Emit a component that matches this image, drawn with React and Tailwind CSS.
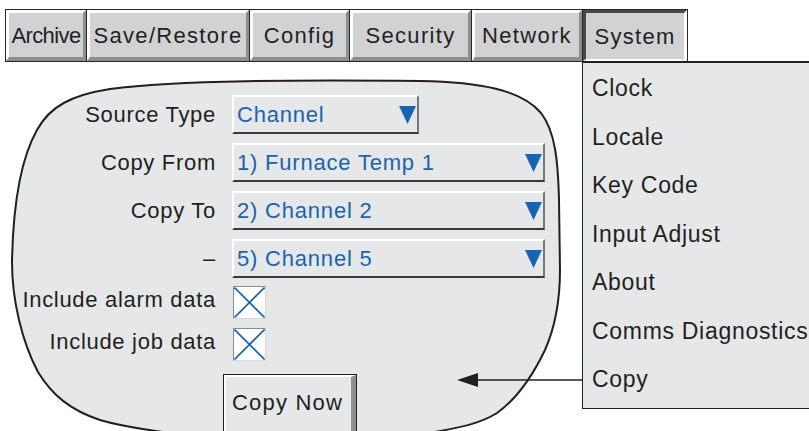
import React from "react";

const FONT = { fontFamily: '"Liberation Sans", Arial, Helvetica, sans-serif' };

function Tab({ label, w, tight, pressed, last }) {
  return (
    <div
      className={`h-[53px] border-y border-l border-[#2b2728] ${last ? "border-r" : ""} flex`}
      style={{ width: w }}
    >
      <div
        className={
          pressed
            ? "flex-1 flex items-center justify-center pt-[2px] bg-[#d1d2d4] border-t-[3px] border-l-[3px] border-t-[#4a4748] border-l-[#4a4748] border-b-[2px] border-r-[3px] border-b-white border-r-white"
            : "flex-1 flex items-center justify-center pt-[2px] bg-[#d1d2d4] border-t-[3px] border-l-[3px] border-t-white border-l-white border-b-[4px] border-r-[3px] border-b-[#8d8e90] border-r-[#8d8e90]"
        }
      >
        <span
          className={`text-[22px] leading-[22px] text-[#231f20] whitespace-nowrap ${
            tight ? "tracking-[-0.6px]" : "tracking-[1.3px]"
          }`}
        >
          {label}
        </span>
      </div>
    </div>
  );
}

function Tri() {
  return (
    <svg width="17" height="18" viewBox="0 0 17 18">
      <polygon points="0,0 17,0 8.5,18" fill="#1764b0" />
    </svg>
  );
}

function Label({ children, extra = "" }) {
  return (
    <div
      className={`w-[216px] shrink-0 text-right text-[22px] leading-[26px] tracking-[0.7px] text-[#231f20] whitespace-nowrap ${extra}`}
    >
      {children}
    </div>
  );
}

function Drop({ text, w, mt }) {
  return (
    <div className={`flex items-center ${mt}`}>
      <Label>{text[0]}</Label>
      <div
        className="ml-[16px] h-[39px] flex items-center justify-between pl-[3px] pr-[1px] border-t-2 border-l-2 border-t-white border-l-white border-b-2 border-r-2 border-b-[#3a3637] border-r-[#77787b]"
        style={{ width: w }}
      >
        <span className="text-[22px] leading-[26px] tracking-[0.8px] text-[#1a63ad] whitespace-nowrap">
          {text[1]}
        </span>
        <Tri />
      </div>
    </div>
  );
}

function Check({ label, mt }) {
  return (
    <div className={`flex items-center ${mt}`}>
      <Label extra="pb-[6px]">{label}</Label>
      <div className="ml-[17px] w-[33px] h-[33px] bg-white border border-t-[#8a8b8d] border-l-[#8a8b8d] border-b-[#d6d7d9] border-r-[#d6d7d9]">
        <svg width="31" height="31" viewBox="0 0 31 31">
          <line x1="0.5" y1="0.5" x2="30.5" y2="30.5" stroke="#1a63ad" strokeWidth="1.6" />
          <line x1="30.5" y1="0.5" x2="0.5" y2="30.5" stroke="#1a63ad" strokeWidth="1.6" />
        </svg>
      </div>
    </div>
  );
}

const MENU = ["Clock", "Locale", "Key Code", "Input Adjust", "About", "Comms Diagnostics", "Copy"];

export default function App() {
  return (
    <div className="relative w-[809px] h-[431px] overflow-hidden bg-white" style={FONT}>
      {/* panel blob drawing */}
      <svg className="absolute left-0 top-0" width="809" height="431" viewBox="0 0 809 431">
        <path
          d="M 12 262 C 13 210, 20 160, 37 130 C 50 106, 72 95, 110 89 C 180 80, 300 80, 420 81 C 480 82, 522 90, 541 113 C 555 131, 558 160, 559 200 L 560 270 C 560 300, 556 325, 545 350 C 533 375, 518 398, 497 413 C 478 425, 455 428, 430 433 L 430 445 L 170 445 L 170 433 C 140 429, 120 426, 100 420 C 70 410, 52 395, 38 372 C 22 342, 12 300, 12 262 Z"
          fill="#e6e7e8"
          stroke="#231f20"
          strokeWidth="2"
        />
      </svg>

      <div className="relative">
        {/* tab bar */}
        <div className="flex pt-[9px] pl-[5px]">
          <Tab label="Archive" w={81} tight />
          <Tab label="Save/Restore" w={163} />
          <Tab label="Config" w={100} />
          <Tab label="Security" w={122} />
          <Tab label="Network" w={111} />
          <Tab label="System" w={106} pressed last />
        </div>

        {/* form */}
        <div className="flex flex-col mt-[33px]">
          <Drop text={["Source Type", "Channel"]} w={187} mt="" />
          <Drop text={["Copy From", "1) Furnace Temp 1"]} w={313} mt="mt-[9px]" />
          <Drop text={["Copy To", "2) Channel 2"]} w={313} mt="mt-[9px]" />
          <Drop text={["–", "5) Channel 5"]} w={313} mt="mt-[9px]" />
          <Check label="Include alarm data" mt="mt-[8px]" />
          <Check label="Include job data" mt="mt-[9px]" />
          <div className="mt-[13px] ml-[223px] w-[134px] h-[70px] border border-[#231f20] flex">
            <div className="flex-1 bg-[#e6e7e8] border-t-2 border-l-2 border-t-white border-l-white border-r-[5px] border-b-[5px] border-r-[#8d8e90] border-b-[#8d8e90] pl-[6px] pt-[15px]">
              <span className="text-[22px] leading-[22px] tracking-[1.2px] text-[#231f20] whitespace-nowrap">
                Copy Now
              </span>
            </div>
          </div>
        </div>
      </div>

      {/* System dropdown menu */}
      <div className="absolute left-[582px] top-[61px] w-[260px] h-[348px] bg-[#e6e7e8] border-t-2 border-l border-b border-[#231f20] pt-[1px]">
        {MENU.map((m) => (
          <div
            key={m}
            className="h-[48.5px] flex items-center pl-[9px] text-[23px] leading-[26px] tracking-[0.7px] text-[#231f20] whitespace-nowrap"
          >
            {m}
          </div>
        ))}
      </div>

      {/* arrow annotation */}
      <svg className="absolute left-[450px] top-[370px]" width="135" height="20" viewBox="0 0 135 20">
        <line x1="27" y1="10" x2="132" y2="10" stroke="#231f20" strokeWidth="1.5" />
        <polygon points="7,10 28,3 28,17" fill="#231f20" />
      </svg>
    </div>
  );
}
